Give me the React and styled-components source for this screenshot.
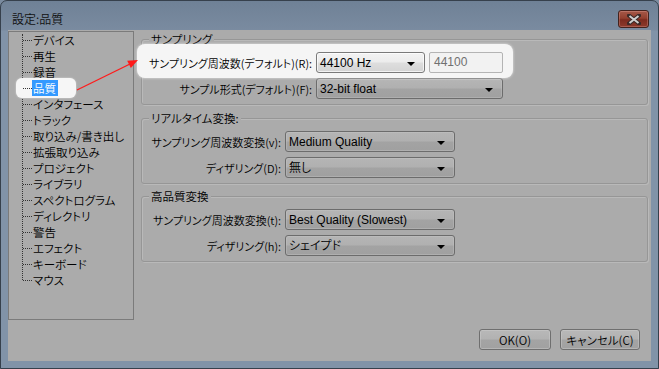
import React from "react";
import styled, { createGlobalStyle } from "styled-components";

const Global = createGlobalStyle`
  html, body { margin: 0; padding: 0; background: #7a8b9f; }
  body { font-family: "Liberation Sans", "Noto Sans CJK JP", sans-serif; }
  * { box-sizing: border-box; }
`;

const FONT = `"Liberation Sans", "Noto Sans CJK JP", sans-serif`;
const JP = `"Noto Sans CJK JP", "Liberation Sans", sans-serif`;

const Window = styled.div`
  position: relative;
  width: 659px;
  height: 369px;
  border: 1px solid #36404c;
  border-radius: 7px 7px 0 0;
  background: linear-gradient(#6f8196 0px, #7a8ba0 29px, #8193a8 30px, #8193a8 100%);
  display: flex;
  flex-direction: column;
  overflow: hidden;
  font-family: ${FONT};
  font-feature-settings: "palt";
  font-weight: 350;
  font-size: 12px;
  color: #000;
`;

const TitleBar = styled.div`
  height: 29px;
  flex: none;
  display: flex;
  justify-content: space-between;
  align-items: flex-start;
  padding: 9px 9px 0 11px;
`;

const Title = styled.div`
  font-family: ${JP};
  line-height: 17px;
  font-size: 12px;
  color: #111;
`;

const CloseButton = styled.div`
  width: 31px;
  height: 18px;
  border: 1px solid #43221d;
  border-radius: 3px;
  background: linear-gradient(#a55848 0%, #93402f 45%, #7c2a1e 55%, #8c3a2c 100%);
  box-shadow: inset 0 0 0 1px rgba(255, 200, 190, 0.25);
  display: flex;
  align-items: center;
  justify-content: center;
`;

const Client = styled.div`
  flex: 1;
  margin: 0 7px 7px 7px;
  background: #ababab;
  display: grid;
  grid-template-columns: 126px 1fr;
  grid-template-rows: 289px auto;
  column-gap: 7px;
  padding: 1px 3px 11px 0;
`;

const TreePanel = styled.div`
  border: 1px solid #7b7b7b;
  background: #ababab;
`;

const TreeList = styled.ul`
  position: relative;
  list-style: none;
  margin: 0;
  padding: 0;
  &::before {
    content: "";
    position: absolute;
    left: 13px;
    top: 2px;
    bottom: 8px;
    border-left: 1px dotted #333;
  }
`;

const TreeItem = styled.li`
  position: relative;
  isolation: isolate;
  height: 16px;
  line-height: 16px;
  font-family: ${JP};
  font-size: 11.5px;
  padding-left: 23px;
  white-space: nowrap;
  &::before {
    content: "";
    position: absolute;
    left: 14px;
    top: 8px;
    width: 9px;
    border-top: 1px dotted #333;
  }
  ${(p) =>
    p.$selected &&
    `
    &::after {
      content: "";
      position: absolute;
      z-index: -1;
      left: 7px;
      top: -2px;
      width: 60px;
      height: 20px;
      background: #f6f6f6;
      border-radius: 6px;
      box-shadow: 0 0 2px rgba(255,255,255,0.6);
    }
  `}
`;

const TreeText = styled.span`
  display: inline-block;
  padding: 0 1px;
  ${(p) => p.$selected && `background: #3399ff; color: #fff; padding: 0 2px 0 1px;`}
`;

const RightColumn = styled.div`
  display: flex;
  flex-direction: column;
`;

const Group = styled.div`
  position: relative;
  margin-top: ${(p) => p.$top}px;
  border: 1px solid #969696;
  border-radius: 3px;
  box-shadow: inset 1px 1px 0 #b9b9b9, 1px 1px 0 #b9b9b9;
  padding: 12px 0 5px 6px;
  display: flex;
  flex-direction: column;
  gap: 5px;
`;

const Legend = styled.div`
  position: absolute;
  top: -9px;
  left: 7px;
  padding: 0 2px;
  line-height: 16px;
  font-family: ${JP};
  font-size: 11.5px;
  background: #ababab;
  white-space: nowrap;
`;

const Row = styled.div`
  display: flex;
  align-items: center;
  gap: 4px;
  align-self: flex-start;
  ${(p) =>
    p.$spot &&
    `
    position: relative;
    margin: -8px -10px -5px -11px;
    padding: 8px 10px 5px 11px;
    background: #f5f5f5;
    border-radius: 8px;
    box-shadow: 0 0 3px rgba(255,255,255,0.7);
  `}
`;

const Label = styled.label`
  width: ${(p) => p.$w}px;
  font-family: ${JP};
  font-size: 11px;
  text-align: right;
  white-space: nowrap;
  line-height: 16px;
  display: flex;
  justify-content: flex-end;
`;

const Combo = styled.div`
  width: ${(p) => p.$w}px;
  height: 21px;
  border: 1px solid ${(p) => (p.$light ? "#7a7a7a" : "#6c6c6c")};
  border-radius: 3px;
  background: ${(p) =>
    p.$light
      ? "linear-gradient(#f3f3f3 0%, #ececec 48%, #dedede 52%, #d4d4d4 100%)"
      : "linear-gradient(#b5b5b5 0%, #b0b0b0 48%, #a3a3a3 52%, #a0a0a0 100%)"};
  box-shadow: inset 0 0 0 1px ${(p) => (p.$light ? "rgba(255,255,255,0.7)" : "rgba(200,200,200,0.35)")};
  display: flex;
  align-items: center;
  padding: 0 9px 0 3px;
  white-space: nowrap;
  color: #000;
`;

const ComboText = styled.span`
  flex: 1;
  line-height: 16px;
`;

const Arrow = styled.span`
  width: 0;
  height: 0;
  border-left: 4px solid transparent;
  border-right: 4px solid transparent;
  border-top: 4px solid #000;
  margin-top: 2px;
`;

const TextBox = styled.div`
  width: 74px;
  height: 21px;
  border: 1px solid #b4b4b4;
  border-radius: 2px;
  background: #f2f2f2;
  color: #707070;
  padding: 0 4px;
  line-height: 19px;
`;

const ButtonRow = styled.div`
  grid-column: 1 / span 2;
  margin-top: 9px;
  display: flex;
  justify-content: flex-end;
  gap: 9px;
  padding-right: 8px;
`;

const Button = styled.div`
  width: ${(p) => p.$w}px;
  height: 21px;
  border: 1px solid #6f6f6f;
  border-radius: 3px;
  background: linear-gradient(#b8b8b8 0%, #b2b2b2 48%, #a4a4a4 52%, #a1a1a1 100%);
  box-shadow: inset 0 0 0 1px rgba(210, 210, 210, 0.4);
  display: flex;
  align-items: center;
  justify-content: center;
  white-space: nowrap;
  font-family: ${JP};
  font-size: 11.5px;
`;

const ArrowOverlay = styled.svg`
  position: absolute;
  left: 0;
  top: 0;
  pointer-events: none;
`;

const treeItems = [
  "デバイス",
  "再生",
  "録音",
  "品質",
  "インタフェース",
  "トラック",
  "取り込み/書き出し",
  "拡張取り込み",
  "プロジェクト",
  "ライブラリ",
  "スペクトログラム",
  "ディレクトリ",
  "警告",
  "エフェクト",
  "キーボード",
  "マウス",
];

function Select({ w, light, children }) {
  return (
    <Combo $w={w} $light={light}>
      <ComboText>{children}</ComboText>
      <Arrow />
    </Combo>
  );
}

export default function App() {
  return (
    <>
      <Global />
      <Window>
        <TitleBar>
          <Title>設定:品質</Title>
          <CloseButton>
            <svg width="14" height="11" viewBox="0 0 14 11">
              <path d="M2 1.5 L12 9.5 M12 1.5 L2 9.5" stroke="#3a2a28" strokeWidth="4" strokeLinecap="square" />
              <path d="M2.5 2 L11.5 9 M11.5 2 L2.5 9" stroke="#cfcfcf" strokeWidth="2" />
            </svg>
          </CloseButton>
        </TitleBar>
        <Client>
          <TreePanel>
            <TreeList>
              {treeItems.map((t) => (
                <TreeItem key={t} $selected={t === "品質"}>
                  <TreeText $selected={t === "品質"}>{t}</TreeText>
                </TreeItem>
              ))}
            </TreeList>
          </TreePanel>
          <RightColumn>
            <Group $top={8}>
              <Legend>サンプリング</Legend>
              <Row $spot>
                <Label $w={164}>サンプリング周波数(デフォルト)(R):</Label>
                <Select w={109} light>44100 Hz</Select>
                <TextBox>44100</TextBox>
              </Row>
              <Row>
                <Label $w={164}>サンプル形式(デフォルト)(F):</Label>
                <Select w={187}>32-bit float</Select>
              </Row>
            </Group>
            <Group $top={13}>
              <Legend>リアルタイム変換:</Legend>
              <Row>
                <Label $w={133}>サンプリング周波数変換(v):</Label>
                <Select w={170}>Medium Quality</Select>
              </Row>
              <Row>
                <Label $w={133}>ディザリング(D):</Label>
                <Select w={170}>無し</Select>
              </Row>
            </Group>
            <Group $top={12}>
              <Legend>高品質変換</Legend>
              <Row>
                <Label $w={133}>サンプリング周波数変換(t):</Label>
                <Select w={170}>Best Quality (Slowest)</Select>
              </Row>
              <Row>
                <Label $w={133}>ディザリング(h):</Label>
                <Select w={170}>シェイプド</Select>
              </Row>
            </Group>
          </RightColumn>
          <ButtonRow>
            <Button $w={72}>OK(O)</Button>
            <Button $w={80}>キャンセル(C)</Button>
          </ButtonRow>
        </Client>
        <ArrowOverlay width="659" height="369" viewBox="0 0 659 369">
          <line x1="76" y1="89" x2="129" y2="63" stroke="#ff1a1a" strokeWidth="1.3" />
          <polygon points="137,59 129.8,67 126.2,59.8" fill="#ff1a1a" />
        </ArrowOverlay>
      </Window>
    </>
  );
}
